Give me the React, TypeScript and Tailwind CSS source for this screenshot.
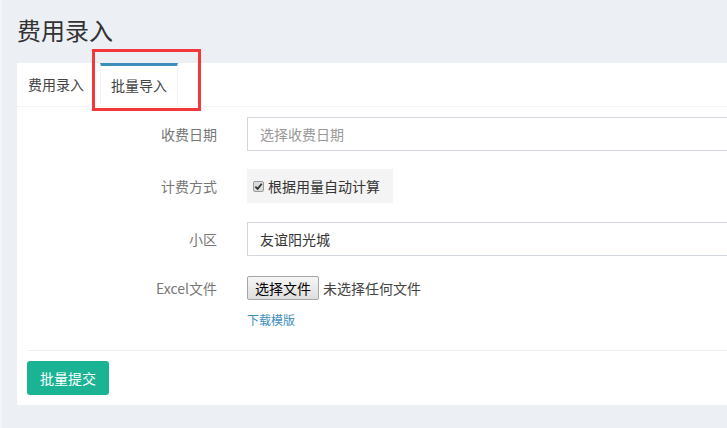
import React from "react";

const font = { fontFamily: '"Noto Sans CJK SC", "Noto Sans", sans-serif' };

const FormRow = ({ label, children }: { label: string; children: React.ReactNode }) => (
  <div className="flex items-start">
    <div className="w-[200px] shrink-0 h-[34px] flex items-center justify-end text-[14px] text-[#777]">{label}</div>
    <div className="ml-[30px] shrink-0">{children}</div>
  </div>
);

const App = () => {
  return (
    <div
      className="w-[727px] h-[428px] overflow-hidden bg-[#ecf0f5] border-l-2 border-[#f4f5f7] relative"
      style={font}
    >
      <div className="h-[63px] pl-[15px] pt-[14px]">
        <h1 className="text-[24px] leading-[32px] text-[#333]">费用录入</h1>
      </div>

      <div className="ml-[15px] bg-white">
        {/* tabs */}
        <div className="flex h-[44px] border-b border-[#f4f4f4]">
          <div className="w-[83px] pl-[11px] flex items-center text-[14px] text-[#444]">费用录入</div>
          <div className="w-[78px] border-t-[3px] border-t-[#3c8dbc] border-x border-x-[#f4f4f4] flex items-center justify-center text-[14px] text-[#444] pb-[1px]">
            批量导入
          </div>
        </div>

        {/* form */}
        <div className="pt-[10px] pb-[22px] flex flex-col">
          <FormRow label="收费日期">
            <div className="h-[34px] w-[520px] border border-[#d2d6de] flex items-center px-[12px] text-[14px] text-[#999]">
              选择收费日期
            </div>
          </FormRow>
          <div className="h-[18px]" />
          <FormRow label="计费方式">
            <div className="h-[34px] w-[146px] bg-[#f4f4f4] flex items-center pl-[6px] text-[14px] text-[#333]">
              <span className="w-[11px] h-[11px] rounded-[2px] border border-[#9a9a9a] bg-[#dcdcdc] flex items-center justify-center mr-[4px]">
                <svg width="9" height="9" viewBox="0 0 10 10">
                  <path d="M1.5 5.2 L4 7.6 L8.6 2" fill="none" stroke="#333" strokeWidth="2" />
                </svg>
              </span>
              根据用量自动计算
            </div>
          </FormRow>
          <div className="h-[19px]" />
          <FormRow label="小区">
            <div className="h-[34px] w-[520px] border border-[#d2d6de] flex items-center px-[12px] text-[14px] text-[#333]">
              友谊阳光城
            </div>
          </FormRow>
          <div className="h-[20px]" />
          <div className="flex items-start">
            <div className="w-[200px] shrink-0 h-[24px] flex items-center justify-end text-[14px] text-[#777]">Excel文件</div>
            <div className="ml-[30px] flex flex-col">
              <div className="flex items-center h-[24px]">
                <span className="h-[24px] px-[7px] flex items-center border border-[#a6a6a6] rounded-[2px] bg-gradient-to-b from-[#f6f6f6] to-[#dedede] text-[14px] text-black">
                  选择文件
                </span>
                <span className="ml-[4px] text-[14px] text-[#444]">未选择任何文件</span>
              </div>
              <a className="mt-[12px] text-[12px] leading-[16px] text-[#3c8dbc]">下载模版</a>
            </div>
          </div>
        </div>

        {/* footer */}
        <div className="ml-[10px] border-t border-[#f0f0f0] pt-[10px] pb-[10px]">
          <button className="h-[34px] w-[82px] rounded-[3px] bg-[#1ab394] text-white text-[14px]">批量提交</button>
        </div>
      </div>

      {/* annotation */}
      <div className="absolute left-[90px] top-[49px] w-[109px] h-[62px] border-[3px] border-[#f2383b]" />
    </div>
  );
};

export default App;
